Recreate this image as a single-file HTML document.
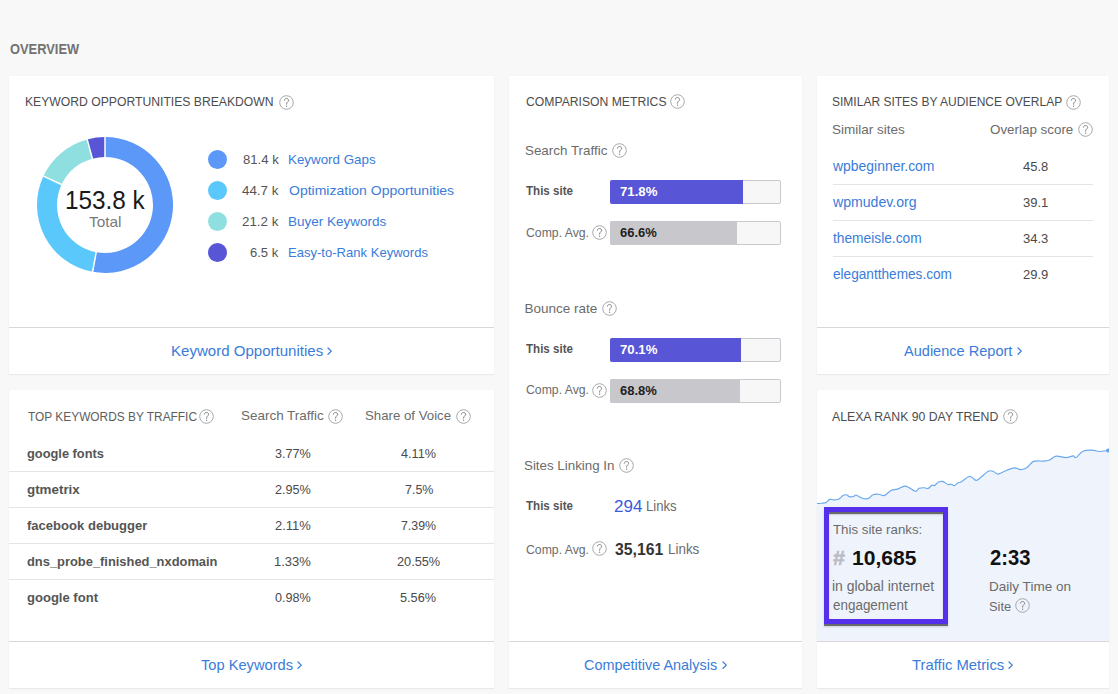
<!DOCTYPE html>
<html><head><meta charset="utf-8"><style>
html,body{margin:0;padding:0;}
body{width:1118px;height:694px;background:#f8f8f8;position:relative;overflow:hidden;font-family:"Liberation Sans",sans-serif;}
.t{position:absolute;white-space:nowrap;line-height:0;transform-origin:0 0;}
.q{position:absolute;}
</style></head><body>
<div style="position:absolute;left:9px;top:76px;width:485px;height:298px;background:#fff;box-shadow:0 1px 1px rgba(0,0,0,0.05),0 0 1px rgba(0,0,0,0.05);"></div>
<div style="position:absolute;left:9px;top:390px;width:485px;height:298px;background:#fff;box-shadow:0 1px 1px rgba(0,0,0,0.05),0 0 1px rgba(0,0,0,0.05);"></div>
<div style="position:absolute;left:509px;top:76px;width:293px;height:612px;background:#fff;box-shadow:0 1px 1px rgba(0,0,0,0.05),0 0 1px rgba(0,0,0,0.05);"></div>
<div style="position:absolute;left:817px;top:76px;width:292px;height:298px;background:#fff;box-shadow:0 1px 1px rgba(0,0,0,0.05),0 0 1px rgba(0,0,0,0.05);"></div>
<div style="position:absolute;left:817px;top:390px;width:292px;height:298px;background:#fff;box-shadow:0 1px 1px rgba(0,0,0,0.05),0 0 1px rgba(0,0,0,0.05);"></div>
<svg style="position:absolute;left:0;top:0" width="300" height="300"><path d="M105.00 137.00A68 68 0 1 1 92.57 271.85L96.23 252.19A48 48 0 1 0 105.00 157.00Z" fill="#5b98f8"/><path d="M92.57 271.85A68 68 0 0 1 43.45 176.09L61.55 184.59A48 48 0 0 0 96.23 252.19Z" fill="#5ac8fa"/><path d="M43.45 176.09A68 68 0 0 1 87.15 139.38L92.40 158.68A48 48 0 0 0 61.55 184.59Z" fill="#8fdfe0"/><path d="M87.15 139.38A68 68 0 0 1 105.00 137.00L105.00 157.00A48 48 0 0 0 92.40 158.68Z" fill="#5856d6"/><line x1="105.00" y1="136.00" x2="105.00" y2="158.00" stroke="#fff" stroke-width="1.5"/><line x1="92.39" y1="272.84" x2="96.41" y2="251.21" stroke="#fff" stroke-width="1.5"/><line x1="42.55" y1="175.66" x2="62.46" y2="185.02" stroke="#fff" stroke-width="1.5"/><line x1="86.89" y1="138.42" x2="92.67" y2="159.65" stroke="#fff" stroke-width="1.5"/></svg>
<div style="position:absolute;left:207.5px;top:149.9px;width:19.0px;height:19.0px;border-radius:50%;background:#5b98f8;"></div>
<div style="position:absolute;left:207.5px;top:180.9px;width:19.0px;height:19.0px;border-radius:50%;background:#5ac8fa;"></div>
<div style="position:absolute;left:207.5px;top:211.9px;width:19.0px;height:19.0px;border-radius:50%;background:#8fdfe0;"></div>
<div style="position:absolute;left:207.5px;top:242.9px;width:19.0px;height:18.99999999999997px;border-radius:50%;background:#5856d6;"></div>
<div style="position:absolute;left:9px;top:327px;width:485px;height:1px;background:#d8d8d8;"></div>
<div style="position:absolute;left:9px;top:471px;width:485px;height:1px;background:#e4e4e4;"></div>
<div style="position:absolute;left:9px;top:507px;width:485px;height:1px;background:#e4e4e4;"></div>
<div style="position:absolute;left:9px;top:543px;width:485px;height:1px;background:#e4e4e4;"></div>
<div style="position:absolute;left:9px;top:579px;width:485px;height:1px;background:#e4e4e4;"></div>
<div style="position:absolute;left:9px;top:641px;width:485px;height:1px;background:#d8d8d8;"></div>
<div style="position:absolute;left:610px;top:180px;width:171px;height:23.5px;background:#f7f7f7;border:1px solid #c9c9d0;box-sizing:border-box;border-radius:2px;"></div>
<div style="position:absolute;left:610px;top:180px;width:133px;height:23.5px;background:#5856d6;border-radius:2px 0 0 2px;"></div>
<div style="position:absolute;left:610px;top:221px;width:171px;height:23.5px;background:#f7f7f7;border:1px solid #c9c9d0;box-sizing:border-box;border-radius:2px;"></div>
<div style="position:absolute;left:610px;top:221px;width:127px;height:23.5px;background:#c7c7cc;border-radius:2px 0 0 2px;"></div>
<div style="position:absolute;left:610px;top:338px;width:171px;height:24px;background:#f7f7f7;border:1px solid #c9c9d0;box-sizing:border-box;border-radius:2px;"></div>
<div style="position:absolute;left:610px;top:338px;width:131px;height:24px;background:#5856d6;border-radius:2px 0 0 2px;"></div>
<div style="position:absolute;left:610px;top:379px;width:171px;height:24px;background:#f7f7f7;border:1px solid #c9c9d0;box-sizing:border-box;border-radius:2px;"></div>
<div style="position:absolute;left:610px;top:379px;width:130px;height:24px;background:#c7c7cc;border-radius:2px 0 0 2px;"></div>
<div style="position:absolute;left:509px;top:641px;width:293px;height:1px;background:#d8d8d8;"></div>
<div style="position:absolute;left:833px;top:184px;width:260px;height:1px;background:#e4e4e4;"></div>
<div style="position:absolute;left:833px;top:220px;width:260px;height:1px;background:#e4e4e4;"></div>
<div style="position:absolute;left:833px;top:256px;width:260px;height:1px;background:#e4e4e4;"></div>
<div style="position:absolute;left:817px;top:327px;width:292px;height:1px;background:#d8d8d8;"></div>
<svg style="position:absolute;left:817px;top:390px" width="292" height="252"><path d="M0.0 113.5C0.8 113.5 3.2 113.4 4.7 113.2C6.2 113.0 7.9 113.0 9.2 112.4C10.5 111.8 11.5 109.8 12.7 109.4C13.9 109.0 15.0 109.9 16.5 109.9C18.0 109.9 20.0 109.9 21.6 109.2C23.2 108.5 24.8 106.2 26.1 105.5C27.4 104.8 28.3 104.6 29.4 104.8C30.5 105.0 31.4 106.3 32.6 106.6C33.8 106.9 35.5 106.8 36.6 106.5C37.7 106.2 37.6 104.7 39.0 105.0C40.4 105.3 43.5 107.7 45.2 108.3C46.9 109.0 48.1 108.9 49.2 108.9C50.4 108.9 51.0 108.8 52.1 108.1C53.2 107.4 54.3 105.3 55.9 104.7C57.5 104.0 60.1 104.0 61.8 104.2C63.5 104.3 64.9 105.5 66.1 105.6C67.3 105.7 67.5 105.6 68.8 104.7C70.1 103.8 72.1 101.3 74.1 100.4C76.1 99.5 78.2 99.8 80.6 99.1C83.0 98.4 85.7 95.7 88.6 96.1C91.6 96.5 96.1 100.9 98.3 101.3C100.5 101.7 100.5 98.9 102.0 98.3C103.5 97.7 105.9 97.7 107.4 97.7C108.9 97.7 110.0 98.9 111.2 98.5C112.5 98.1 113.8 95.8 114.9 95.3C116.0 94.8 116.4 96.0 117.6 95.4C118.8 94.8 120.5 92.4 121.9 91.8C123.3 91.2 124.7 91.2 126.2 91.6C127.7 92.1 129.7 94.1 131.0 94.5C132.3 94.9 133.1 94.0 134.2 94.2C135.3 94.4 136.4 95.8 137.5 95.6C138.6 95.4 139.6 93.5 140.7 92.9C141.9 92.3 142.6 92.8 144.4 91.8C146.2 90.8 149.6 87.4 151.4 86.7C153.2 86.0 153.8 86.9 155.2 87.5C156.6 88.1 157.3 91.2 160.0 90.2C162.7 89.2 168.5 82.7 171.3 81.3C174.1 79.9 175.2 81.2 176.9 81.7C178.5 82.2 179.1 84.3 181.2 84.1C183.3 83.9 186.9 81.3 189.6 80.3C192.3 79.3 195.0 78.0 197.4 77.9C199.8 77.8 201.7 79.7 203.8 79.6C205.9 79.5 208.0 78.9 210.1 77.5C212.2 76.1 213.8 72.5 216.5 71.4C219.2 70.3 223.7 71.3 226.4 71.1C229.1 70.9 230.6 70.8 232.7 70.0C234.8 69.2 236.4 66.5 239.1 66.1C241.8 65.7 246.2 67.6 249.0 67.6C251.8 67.6 254.4 65.9 256.1 65.9C257.7 65.9 257.3 68.4 258.9 67.6C260.6 66.8 263.3 62.4 266.0 61.2C268.7 59.9 272.4 60.1 275.1 60.1C277.8 60.2 279.6 61.4 282.2 61.5C284.8 61.6 289.1 60.7 290.7 60.5C292.3 60.3 291.8 60.5 292.0 60.5L292 251L0 251Z" fill="#eff4fc"/><path d="M0.0 113.5C0.8 113.5 3.2 113.4 4.7 113.2C6.2 113.0 7.9 113.0 9.2 112.4C10.5 111.8 11.5 109.8 12.7 109.4C13.9 109.0 15.0 109.9 16.5 109.9C18.0 109.9 20.0 109.9 21.6 109.2C23.2 108.5 24.8 106.2 26.1 105.5C27.4 104.8 28.3 104.6 29.4 104.8C30.5 105.0 31.4 106.3 32.6 106.6C33.8 106.9 35.5 106.8 36.6 106.5C37.7 106.2 37.6 104.7 39.0 105.0C40.4 105.3 43.5 107.7 45.2 108.3C46.9 109.0 48.1 108.9 49.2 108.9C50.4 108.9 51.0 108.8 52.1 108.1C53.2 107.4 54.3 105.3 55.9 104.7C57.5 104.0 60.1 104.0 61.8 104.2C63.5 104.3 64.9 105.5 66.1 105.6C67.3 105.7 67.5 105.6 68.8 104.7C70.1 103.8 72.1 101.3 74.1 100.4C76.1 99.5 78.2 99.8 80.6 99.1C83.0 98.4 85.7 95.7 88.6 96.1C91.6 96.5 96.1 100.9 98.3 101.3C100.5 101.7 100.5 98.9 102.0 98.3C103.5 97.7 105.9 97.7 107.4 97.7C108.9 97.7 110.0 98.9 111.2 98.5C112.5 98.1 113.8 95.8 114.9 95.3C116.0 94.8 116.4 96.0 117.6 95.4C118.8 94.8 120.5 92.4 121.9 91.8C123.3 91.2 124.7 91.2 126.2 91.6C127.7 92.1 129.7 94.1 131.0 94.5C132.3 94.9 133.1 94.0 134.2 94.2C135.3 94.4 136.4 95.8 137.5 95.6C138.6 95.4 139.6 93.5 140.7 92.9C141.9 92.3 142.6 92.8 144.4 91.8C146.2 90.8 149.6 87.4 151.4 86.7C153.2 86.0 153.8 86.9 155.2 87.5C156.6 88.1 157.3 91.2 160.0 90.2C162.7 89.2 168.5 82.7 171.3 81.3C174.1 79.9 175.2 81.2 176.9 81.7C178.5 82.2 179.1 84.3 181.2 84.1C183.3 83.9 186.9 81.3 189.6 80.3C192.3 79.3 195.0 78.0 197.4 77.9C199.8 77.8 201.7 79.7 203.8 79.6C205.9 79.5 208.0 78.9 210.1 77.5C212.2 76.1 213.8 72.5 216.5 71.4C219.2 70.3 223.7 71.3 226.4 71.1C229.1 70.9 230.6 70.8 232.7 70.0C234.8 69.2 236.4 66.5 239.1 66.1C241.8 65.7 246.2 67.6 249.0 67.6C251.8 67.6 254.4 65.9 256.1 65.9C257.7 65.9 257.3 68.4 258.9 67.6C260.6 66.8 263.3 62.4 266.0 61.2C268.7 59.9 272.4 60.1 275.1 60.1C277.8 60.2 279.6 61.4 282.2 61.5C284.8 61.6 289.1 60.7 290.7 60.5C292.3 60.3 291.8 60.5 292.0 60.5" fill="none" stroke="#6aa8ef" stroke-width="1.15"/><circle cx="291" cy="60.5" r="2" fill="#68a6ef"/></svg>
<div style="position:absolute;left:824px;top:507px;width:124px;height:117px;border:5px solid #5530ea;box-sizing:border-box;box-shadow:0 2px 0 rgba(70,70,70,0.75),0 3px 2px rgba(0,0,0,0.15), inset 0 2px 0 rgba(70,70,70,0.75), inset 0 3px 2px rgba(0,0,0,0.15);"></div>
<div style="position:absolute;left:817px;top:641px;width:292px;height:1px;background:#d8d8d8;"></div>
<div class="t" style="left:10.00px;top:48.65px;font-size:14px;color:#727272;font-weight:700;transform:scaleX(0.9200);">OVERVIEW</div>
<div class="t" style="left:25.08px;top:102.13px;font-size:13.2px;color:#4c4c4c;transform:scaleX(0.9228);">KEYWORD OPPORTUNITIES BREAKDOWN</div>
<div class="t" style="left:64.66px;top:199.54px;font-size:25px;color:#1a1a1a;transform:scaleX(0.9725);">153.8 k</div>
<div class="t" style="left:88.50px;top:221.60px;font-size:15px;color:#7a7a7a;transform:scaleX(1.0258);">Total</div>
<div class="t" style="left:242.70px;top:159.95px;font-size:13.7px;color:#555;transform:scaleX(0.9595);">81.4 k</div>
<div class="t" style="left:287.91px;top:160.02px;font-size:13.5px;color:#3a7cd9;transform:scaleX(0.9897);">Keyword Gaps</div>
<div class="t" style="left:242.10px;top:190.95px;font-size:13.7px;color:#555;transform:scaleX(0.9757);">44.7 k</div>
<div class="t" style="left:288.90px;top:191.02px;font-size:13.5px;color:#3a7cd9;transform:scaleX(1.0377);">Optimization Opportunities</div>
<div class="t" style="left:242.10px;top:221.95px;font-size:13.7px;color:#555;transform:scaleX(0.9757);">21.2 k</div>
<div class="t" style="left:287.90px;top:222.02px;font-size:13.5px;color:#3a7cd9;">Buyer Keywords</div>
<div class="t" style="left:249.70px;top:252.95px;font-size:13.7px;color:#555;transform:scaleX(0.9500);">6.5 k</div>
<div class="t" style="left:287.93px;top:253.02px;font-size:13.5px;color:#3a7cd9;transform:scaleX(0.9667);">Easy-to-Rank Keywords</div>
<div class="t" style="left:170.94px;top:351.48px;font-size:14.2px;color:#3a7cd9;transform:scaleX(1.0606);">Keyword Opportunities</div>
<div class="t" style="left:27.50px;top:416.53px;font-size:13.2px;color:#5e5e5e;transform:scaleX(0.9021);">TOP KEYWORDS BY TRAFFIC</div>
<div class="t" style="left:241.30px;top:416.42px;font-size:13.5px;color:#6b6b6b;transform:scaleX(0.9963);">Search Traffic</div>
<div class="t" style="left:365.22px;top:416.42px;font-size:13.5px;color:#6b6b6b;transform:scaleX(0.9805);">Share of Voice</div>
<div class="t" style="left:26.90px;top:453.59px;font-size:13.6px;color:#555;font-weight:700;transform:scaleX(0.9432);">google fonts</div>
<div class="t" style="left:274.70px;top:453.55px;font-size:13.7px;color:#4a4a4a;transform:scaleX(0.9231);">3.77%</div>
<div class="t" style="left:400.90px;top:453.55px;font-size:13.7px;color:#4a4a4a;transform:scaleX(0.9237);">4.11%</div>
<div class="t" style="left:26.90px;top:489.59px;font-size:13.6px;color:#555;font-weight:700;transform:scaleX(0.9833);">gtmetrix</div>
<div class="t" style="left:274.70px;top:489.55px;font-size:13.7px;color:#4a4a4a;transform:scaleX(0.9231);">2.95%</div>
<div class="t" style="left:404.60px;top:489.55px;font-size:13.7px;color:#4a4a4a;transform:scaleX(0.9097);">7.5%</div>
<div class="t" style="left:26.90px;top:525.59px;font-size:13.6px;color:#555;font-weight:700;transform:scaleX(0.9600);">facebook debugger</div>
<div class="t" style="left:274.70px;top:525.55px;font-size:13.7px;color:#4a4a4a;transform:scaleX(0.9474);">2.11%</div>
<div class="t" style="left:401.00px;top:525.55px;font-size:13.7px;color:#4a4a4a;transform:scaleX(0.9026);">7.39%</div>
<div class="t" style="left:26.90px;top:561.59px;font-size:13.6px;color:#555;font-weight:700;transform:scaleX(0.9480);">dns_probe_finished_nxdomain</div>
<div class="t" style="left:273.75px;top:561.55px;font-size:13.7px;color:#4a4a4a;transform:scaleX(0.9474);">1.33%</div>
<div class="t" style="left:397.30px;top:561.55px;font-size:13.7px;color:#4a4a4a;transform:scaleX(0.9304);">20.55%</div>
<div class="t" style="left:26.90px;top:597.59px;font-size:13.6px;color:#555;font-weight:700;transform:scaleX(0.9595);">google font</div>
<div class="t" style="left:274.70px;top:597.55px;font-size:13.7px;color:#4a4a4a;transform:scaleX(0.9231);">0.98%</div>
<div class="t" style="left:400.07px;top:597.55px;font-size:13.7px;color:#4a4a4a;transform:scaleX(0.9263);">5.56%</div>
<div class="t" style="left:201.00px;top:665.28px;font-size:14.2px;color:#3a7cd9;transform:scaleX(1.0326);">Top Keywords</div>
<div class="t" style="left:525.50px;top:102.33px;font-size:13.2px;color:#4c4c4c;transform:scaleX(0.9237);">COMPARISON METRICS</div>
<div class="t" style="left:524.51px;top:150.72px;font-size:13.5px;color:#6b6b6b;transform:scaleX(0.9915);">Search Traffic</div>
<div class="t" style="left:525.50px;top:191.47px;font-size:12.2px;color:#555;font-weight:700;transform:scaleX(0.9490);">This site</div>
<div class="t" style="left:620.00px;top:191.78px;font-size:13.2px;color:#fff;font-weight:700;">71.8%</div>
<div class="t" style="left:525.50px;top:233.20px;font-size:13px;color:#6b6b6b;transform:scaleX(0.9409);">Comp. Avg.</div>
<div class="t" style="left:620.00px;top:232.78px;font-size:13.2px;color:#1e1e1e;font-weight:700;transform:scaleX(0.9865);">66.6%</div>
<div class="t" style="left:524.50px;top:308.52px;font-size:13.5px;color:#6b6b6b;">Bounce rate</div>
<div class="t" style="left:525.50px;top:349.27px;font-size:12.2px;color:#555;font-weight:700;transform:scaleX(0.9490);">This site</div>
<div class="t" style="left:620.00px;top:350.03px;font-size:13.2px;color:#fff;font-weight:700;">70.1%</div>
<div class="t" style="left:525.50px;top:390.20px;font-size:13px;color:#6b6b6b;transform:scaleX(0.9409);">Comp. Avg.</div>
<div class="t" style="left:620.00px;top:391.03px;font-size:13.2px;color:#1e1e1e;font-weight:700;transform:scaleX(0.9865);">68.8%</div>
<div class="t" style="left:524.41px;top:465.72px;font-size:13.5px;color:#6b6b6b;transform:scaleX(0.9878);">Sites Linking In</div>
<div class="t" style="left:525.50px;top:506.47px;font-size:12.2px;color:#555;font-weight:700;transform:scaleX(0.9490);">This site</div>
<div class="t" style="left:614.17px;top:505.78px;font-size:16.5px;color:#3d5ade;transform:scaleX(1.0308);">294</div>
<div class="t" style="left:645.55px;top:506.92px;font-size:13.8px;color:#6b6b6b;transform:scaleX(0.9516);">Links</div>
<div class="t" style="left:525.50px;top:550.00px;font-size:13px;color:#6b6b6b;transform:scaleX(0.9409);">Comp. Avg.</div>
<div class="t" style="left:615.20px;top:548.78px;font-size:16.5px;color:#333;font-weight:700;transform:scaleX(0.9560);">35,161</div>
<div class="t" style="left:667.83px;top:549.72px;font-size:13.8px;color:#6b6b6b;transform:scaleX(0.9710);">Links</div>
<div class="t" style="left:584.20px;top:665.48px;font-size:14.2px;color:#3a7cd9;transform:scaleX(1.0168);">Competitive Analysis</div>
<div class="t" style="left:832.09px;top:101.93px;font-size:13.2px;color:#4c4c4c;transform:scaleX(0.9112);">SIMILAR SITES BY AUDIENCE OVERLAP</div>
<div class="t" style="left:832.01px;top:129.79px;font-size:13.6px;color:#6b6b6b;transform:scaleX(0.9944);">Similar sites</div>
<div class="t" style="left:990.30px;top:129.79px;font-size:13.6px;color:#6b6b6b;transform:scaleX(0.9845);">Overlap score</div>
<div class="t" style="left:833.00px;top:166.72px;font-size:13.8px;color:#3a7cd9;transform:scaleX(1.0100);">wpbeginner.com</div>
<div class="t" style="left:1022.70px;top:166.75px;font-size:13.7px;color:#4a4a4a;transform:scaleX(0.9500);">45.8</div>
<div class="t" style="left:833.00px;top:202.82px;font-size:13.8px;color:#3a7cd9;transform:scaleX(1.0210);">wpmudev.org</div>
<div class="t" style="left:1022.70px;top:202.85px;font-size:13.7px;color:#4a4a4a;transform:scaleX(0.9500);">39.1</div>
<div class="t" style="left:833.00px;top:238.92px;font-size:13.8px;color:#3a7cd9;transform:scaleX(0.9966);">themeisle.com</div>
<div class="t" style="left:1022.70px;top:238.95px;font-size:13.7px;color:#4a4a4a;transform:scaleX(0.9500);">34.3</div>
<div class="t" style="left:833.00px;top:275.02px;font-size:13.8px;color:#3a7cd9;transform:scaleX(0.9875);">elegantthemes.com</div>
<div class="t" style="left:1022.70px;top:275.05px;font-size:13.7px;color:#4a4a4a;transform:scaleX(0.9500);">29.9</div>
<div class="t" style="left:904.20px;top:351.48px;font-size:14.2px;color:#3a7cd9;transform:scaleX(1.0255);">Audience Report</div>
<div class="t" style="left:832.40px;top:416.83px;font-size:13.2px;color:#4c4c4c;transform:scaleX(0.9296);">ALEXA RANK 90 DAY TREND</div>
<div class="t" style="left:833.20px;top:529.72px;font-size:13.5px;color:#6b6b6b;transform:scaleX(0.9833);">This site ranks:</div>
<div class="t" style="left:833.00px;top:558.02px;font-size:21px;color:#bcbcc6;font-weight:700;transform:scaleX(1.0250);-webkit-text-stroke:0.6px #bcbcc6;">#</div>
<div class="t" style="left:851.50px;top:558.02px;font-size:21px;color:#111;font-weight:700;transform:scaleX(1.0032);">10,685</div>
<div class="t" style="left:831.99px;top:586.72px;font-size:13.8px;color:#6b6b6b;transform:scaleX(1.0089);">in global internet</div>
<div class="t" style="left:833.00px;top:605.72px;font-size:13.8px;color:#6b6b6b;transform:scaleX(0.9740);">engagement</div>
<div class="t" style="left:989.50px;top:557.85px;font-size:21.5px;color:#111;font-weight:700;transform:scaleX(0.9395);">2:33</div>
<div class="t" style="left:988.50px;top:587.19px;font-size:13.6px;color:#6b6b6b;transform:scaleX(0.9963);">Daily Time on</div>
<div class="t" style="left:988.55px;top:606.69px;font-size:13.6px;color:#6b6b6b;transform:scaleX(0.9500);">Site</div>
<div class="t" style="left:912.10px;top:665.48px;font-size:14.2px;color:#3a7cd9;transform:scaleX(1.0443);">Traffic Metrics</div>
<svg class="q" style="left:278.5px;top:94.5px" width="15" height="15" viewBox="0 0 15 15"><circle cx="7.5" cy="7.5" r="6.8" fill="none" stroke="#a8a8a8" stroke-width="1"/><path d="M5.3 5.6C5.3 4.3 6.2 3.5 7.5 3.5C8.7 3.5 9.6 4.3 9.6 5.4C9.6 6.8 7.6 7.1 7.6 8.9V9.6" fill="none" stroke="#777" stroke-width="0.9"/><circle cx="7.6" cy="11.2" r="0.65" fill="#777"/></svg>
<svg style="position:absolute;left:327.0px;top:347.4px" width="6" height="9" viewBox="0 0 6 9"><polyline points="1,1 4.3,4.15 1,7.3" fill="none" stroke="#3a7cd9" stroke-width="1.25" stroke-linecap="round" stroke-linejoin="round"/></svg>
<svg class="q" style="left:199.2px;top:408.5px" width="15" height="15" viewBox="0 0 15 15"><circle cx="7.5" cy="7.5" r="6.8" fill="none" stroke="#a8a8a8" stroke-width="1"/><path d="M5.3 5.6C5.3 4.3 6.2 3.5 7.5 3.5C8.7 3.5 9.6 4.3 9.6 5.4C9.6 6.8 7.6 7.1 7.6 8.9V9.6" fill="none" stroke="#777" stroke-width="0.9"/><circle cx="7.6" cy="11.2" r="0.65" fill="#777"/></svg>
<svg class="q" style="left:328.3px;top:408.5px" width="15" height="15" viewBox="0 0 15 15"><circle cx="7.5" cy="7.5" r="6.8" fill="none" stroke="#a8a8a8" stroke-width="1"/><path d="M5.3 5.6C5.3 4.3 6.2 3.5 7.5 3.5C8.7 3.5 9.6 4.3 9.6 5.4C9.6 6.8 7.6 7.1 7.6 8.9V9.6" fill="none" stroke="#777" stroke-width="0.9"/><circle cx="7.6" cy="11.2" r="0.65" fill="#777"/></svg>
<svg class="q" style="left:456.3px;top:408.5px" width="15" height="15" viewBox="0 0 15 15"><circle cx="7.5" cy="7.5" r="6.8" fill="none" stroke="#a8a8a8" stroke-width="1"/><path d="M5.3 5.6C5.3 4.3 6.2 3.5 7.5 3.5C8.7 3.5 9.6 4.3 9.6 5.4C9.6 6.8 7.6 7.1 7.6 8.9V9.6" fill="none" stroke="#777" stroke-width="0.9"/><circle cx="7.6" cy="11.2" r="0.65" fill="#777"/></svg>
<svg style="position:absolute;left:297.3px;top:661.2px" width="6" height="9" viewBox="0 0 6 9"><polyline points="1,1 4.3,4.15 1,7.3" fill="none" stroke="#3a7cd9" stroke-width="1.25" stroke-linecap="round" stroke-linejoin="round"/></svg>
<svg class="q" style="left:670.3px;top:94.2px" width="15" height="15" viewBox="0 0 15 15"><circle cx="7.5" cy="7.5" r="6.8" fill="none" stroke="#a8a8a8" stroke-width="1"/><path d="M5.3 5.6C5.3 4.3 6.2 3.5 7.5 3.5C8.7 3.5 9.6 4.3 9.6 5.4C9.6 6.8 7.6 7.1 7.6 8.9V9.6" fill="none" stroke="#777" stroke-width="0.9"/><circle cx="7.6" cy="11.2" r="0.65" fill="#777"/></svg>
<svg class="q" style="left:611.5px;top:142.5px" width="15" height="15" viewBox="0 0 15 15"><circle cx="7.5" cy="7.5" r="6.8" fill="none" stroke="#a8a8a8" stroke-width="1"/><path d="M5.3 5.6C5.3 4.3 6.2 3.5 7.5 3.5C8.7 3.5 9.6 4.3 9.6 5.4C9.6 6.8 7.6 7.1 7.6 8.9V9.6" fill="none" stroke="#777" stroke-width="0.9"/><circle cx="7.6" cy="11.2" r="0.65" fill="#777"/></svg>
<svg class="q" style="left:591.5px;top:224.5px" width="15" height="15" viewBox="0 0 15 15"><circle cx="7.5" cy="7.5" r="6.8" fill="none" stroke="#a8a8a8" stroke-width="1"/><path d="M5.3 5.6C5.3 4.3 6.2 3.5 7.5 3.5C8.7 3.5 9.6 4.3 9.6 5.4C9.6 6.8 7.6 7.1 7.6 8.9V9.6" fill="none" stroke="#777" stroke-width="0.9"/><circle cx="7.6" cy="11.2" r="0.65" fill="#777"/></svg>
<svg class="q" style="left:602.2px;top:300.8px" width="15" height="15" viewBox="0 0 15 15"><circle cx="7.5" cy="7.5" r="6.8" fill="none" stroke="#a8a8a8" stroke-width="1"/><path d="M5.3 5.6C5.3 4.3 6.2 3.5 7.5 3.5C8.7 3.5 9.6 4.3 9.6 5.4C9.6 6.8 7.6 7.1 7.6 8.9V9.6" fill="none" stroke="#777" stroke-width="0.9"/><circle cx="7.6" cy="11.2" r="0.65" fill="#777"/></svg>
<svg class="q" style="left:591.5px;top:382.5px" width="15" height="15" viewBox="0 0 15 15"><circle cx="7.5" cy="7.5" r="6.8" fill="none" stroke="#a8a8a8" stroke-width="1"/><path d="M5.3 5.6C5.3 4.3 6.2 3.5 7.5 3.5C8.7 3.5 9.6 4.3 9.6 5.4C9.6 6.8 7.6 7.1 7.6 8.9V9.6" fill="none" stroke="#777" stroke-width="0.9"/><circle cx="7.6" cy="11.2" r="0.65" fill="#777"/></svg>
<svg class="q" style="left:618.5px;top:457.7px" width="15" height="15" viewBox="0 0 15 15"><circle cx="7.5" cy="7.5" r="6.8" fill="none" stroke="#a8a8a8" stroke-width="1"/><path d="M5.3 5.6C5.3 4.3 6.2 3.5 7.5 3.5C8.7 3.5 9.6 4.3 9.6 5.4C9.6 6.8 7.6 7.1 7.6 8.9V9.6" fill="none" stroke="#777" stroke-width="0.9"/><circle cx="7.6" cy="11.2" r="0.65" fill="#777"/></svg>
<svg class="q" style="left:591.5px;top:540.9px" width="15" height="15" viewBox="0 0 15 15"><circle cx="7.5" cy="7.5" r="6.8" fill="none" stroke="#a8a8a8" stroke-width="1"/><path d="M5.3 5.6C5.3 4.3 6.2 3.5 7.5 3.5C8.7 3.5 9.6 4.3 9.6 5.4C9.6 6.8 7.6 7.1 7.6 8.9V9.6" fill="none" stroke="#777" stroke-width="0.9"/><circle cx="7.6" cy="11.2" r="0.65" fill="#777"/></svg>
<svg style="position:absolute;left:721.8px;top:661.4px" width="6" height="9" viewBox="0 0 6 9"><polyline points="1,1 4.3,4.15 1,7.3" fill="none" stroke="#3a7cd9" stroke-width="1.25" stroke-linecap="round" stroke-linejoin="round"/></svg>
<svg class="q" style="left:1066.2px;top:94.8px" width="15" height="15" viewBox="0 0 15 15"><circle cx="7.5" cy="7.5" r="6.8" fill="none" stroke="#a8a8a8" stroke-width="1"/><path d="M5.3 5.6C5.3 4.3 6.2 3.5 7.5 3.5C8.7 3.5 9.6 4.3 9.6 5.4C9.6 6.8 7.6 7.1 7.6 8.9V9.6" fill="none" stroke="#777" stroke-width="0.9"/><circle cx="7.6" cy="11.2" r="0.65" fill="#777"/></svg>
<svg class="q" style="left:1077.5px;top:122.1px" width="15" height="15" viewBox="0 0 15 15"><circle cx="7.5" cy="7.5" r="6.8" fill="none" stroke="#a8a8a8" stroke-width="1"/><path d="M5.3 5.6C5.3 4.3 6.2 3.5 7.5 3.5C8.7 3.5 9.6 4.3 9.6 5.4C9.6 6.8 7.6 7.1 7.6 8.9V9.6" fill="none" stroke="#777" stroke-width="0.9"/><circle cx="7.6" cy="11.2" r="0.65" fill="#777"/></svg>
<svg style="position:absolute;left:1017.3px;top:347.4px" width="6" height="9" viewBox="0 0 6 9"><polyline points="1,1 4.3,4.15 1,7.3" fill="none" stroke="#3a7cd9" stroke-width="1.25" stroke-linecap="round" stroke-linejoin="round"/></svg>
<svg class="q" style="left:1003.4px;top:408.6px" width="15" height="15" viewBox="0 0 15 15"><circle cx="7.5" cy="7.5" r="6.8" fill="none" stroke="#a8a8a8" stroke-width="1"/><path d="M5.3 5.6C5.3 4.3 6.2 3.5 7.5 3.5C8.7 3.5 9.6 4.3 9.6 5.4C9.6 6.8 7.6 7.1 7.6 8.9V9.6" fill="none" stroke="#777" stroke-width="0.9"/><circle cx="7.6" cy="11.2" r="0.65" fill="#777"/></svg>
<svg class="q" style="left:1014.5px;top:598.1px" width="15" height="15" viewBox="0 0 15 15"><circle cx="7.5" cy="7.5" r="6.8" fill="none" stroke="#a8a8a8" stroke-width="1"/><path d="M5.3 5.6C5.3 4.3 6.2 3.5 7.5 3.5C8.7 3.5 9.6 4.3 9.6 5.4C9.6 6.8 7.6 7.1 7.6 8.9V9.6" fill="none" stroke="#777" stroke-width="0.9"/><circle cx="7.6" cy="11.2" r="0.65" fill="#777"/></svg>
<svg style="position:absolute;left:1008.4px;top:661.4px" width="6" height="9" viewBox="0 0 6 9"><polyline points="1,1 4.3,4.15 1,7.3" fill="none" stroke="#3a7cd9" stroke-width="1.25" stroke-linecap="round" stroke-linejoin="round"/></svg>
</body></html>
